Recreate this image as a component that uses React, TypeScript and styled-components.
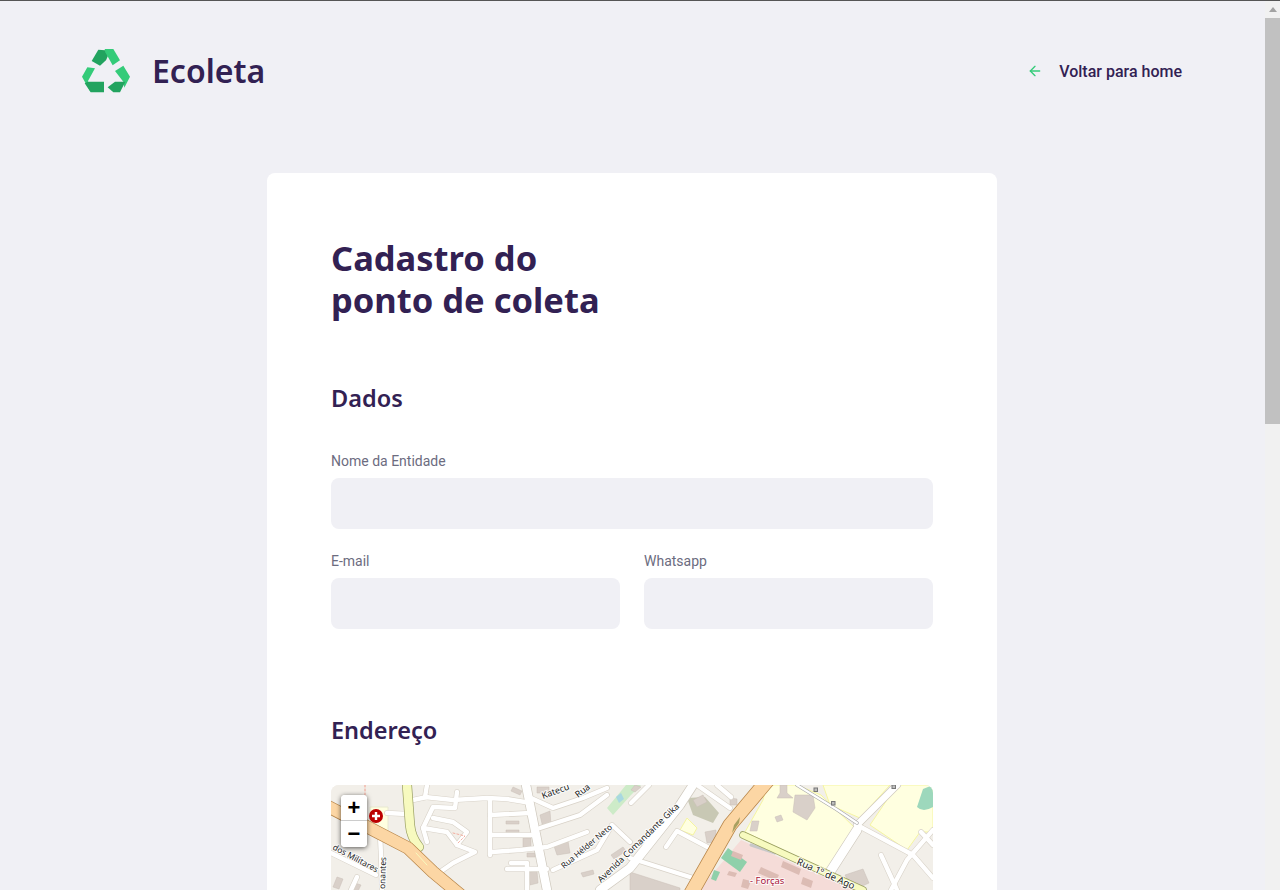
import styled, { createGlobalStyle } from "styled-components";
import { FiArrowLeft } from "react-icons/fi";

const GlobalStyle = createGlobalStyle`
  * {
    box-sizing: border-box;
  }
  html, body {
    margin: 0;
    height: 100%;
    overflow: hidden;
    background: #f0f0f5;
    font-family: Roboto, "Liberation Sans", sans-serif;
    color: #322153;
  }
`;

const TITLE_FONT = `"Noto Sans", "Open Sans", sans-serif`;

const TopLine = styled.div`
  height: 1px;
  background: #555;
`;

const Window = styled.div`
  display: flex;
  height: calc(100vh - 1px);
`;

const Viewport = styled.main`
  flex: 1;
  min-width: 0;
  overflow: hidden;
`;

// the browser's own scrollbar is hidden in the headless window
const ScrollBar = styled.div`
  width: 15px;
  background: #f1f1f1;
`;

const ScrollArrow = styled.div`
  height: 17px;
  display: flex;
  align-items: center;
  justify-content: center;

  &::before {
    content: "";
    border-left: 4px solid transparent;
    border-right: 4px solid transparent;
    border-bottom: 5px solid #a3a3a3;
  }
`;

const ScrollThumb = styled.div`
  height: 406px;
  background: #c1c1c1;
`;

const Page = styled.div`
  width: 1100px;
  margin-left: 82px;
  padding-bottom: 80px;
`;

const Header = styled.header`
  height: 172px;
  padding-top: 48px;
  display: flex;
  justify-content: space-between;
  align-items: flex-start;
`;

const Brand = styled.div`
  display: flex;
  align-items: center;
  gap: 22px;
  height: 44px;
`;

const BrandName = styled.span`
  font-family: ${TITLE_FONT};
  font-size: 32px;
  font-weight: 600;
  line-height: 44px;
`;

const BackLink = styled.a`
  display: flex;
  align-items: center;
  height: 44px;
  font-size: 16px;
  font-weight: 500;
  color: #322153;
  text-decoration: none;

  svg {
    color: #34cb79;
    font-size: 16px;
    margin-right: 16px;
  }
`;

const Card = styled.form`
  width: 730px;
  min-height: 1620px;
  margin: 0 auto;
  padding: 64px;
  background: #fff;
  border-radius: 8px;
`;

const Title = styled.h1`
  margin: 0 0 64px;
  font-family: ${TITLE_FONT};
  font-size: 34.5px;
  font-weight: 700;
  line-height: 42px;
`;

const Section = styled.fieldset`
  margin: 0 0 88px;
  padding: 0;
  border: 0;
  min-width: 0;
`;

const Legend = styled.h2`
  margin: 0 0 41px;
  font-family: ${TITLE_FONT};
  font-size: 23.5px;
  font-weight: 600;
  line-height: 27px;
`;

const Row = styled.div`
  display: flex;
  gap: 24px;
`;

const Field = styled.div`
  flex: 1;
  display: flex;
  flex-direction: column;
  margin-bottom: 24px;

  ${Row}:last-child & {
    margin-bottom: 0;
  }
`;

const Label = styled.label`
  font-size: 14px;
  line-height: 17px;
  margin-bottom: 8px;
  color: #6c6c80;
`;

const Input = styled.input`
  width: 100%;
  height: 51px;
  border: 0;
  border-radius: 8px;
  background: #f0f0f5;
  padding: 16px 24px;
  font-size: 16px;
  color: #6c6c80;
`;

const MapFrame = styled.div`
  position: relative;
  height: 350px;
  border-radius: 8px;
  overflow: hidden;
  background: #f2efe9;

  svg {
    display: block;
  }
`;

const ZoomControl = styled.div`
  position: absolute;
  top: 10px;
  left: 10px;
  width: 26px;
  border-radius: 4px;
  background: #fff;
  box-shadow: 0 1px 5px rgba(0, 0, 0, 0.65);
  overflow: hidden;
`;

const ZoomButton = styled.a<{ divided?: boolean }>`
  display: block;
  height: 26px;
  line-height: 26px;
  text-align: center;
  font-family: "Liberation Sans", sans-serif;
  font-size: 22px;
  font-weight: 700;
  color: #000;
  background: #fff;
  border-bottom: ${(props) => (props.divided ? "1px solid #ccc" : "0")};
`;

const MapLabel = styled.text<{ size?: number; tone?: string }>`
  font-family: "Noto Sans", "Open Sans", sans-serif;
  font-size: ${(props) => props.size || 9}px;
  fill: ${(props) => props.tone || "#1c1c1c"};
  stroke: rgba(255, 255, 255, 0.85);
  stroke-width: 2px;
  paint-order: stroke;
`;

const RecycleLogo = () => (
  <svg width="48" height="44" viewBox="36 42 144 132" aria-hidden="true">
    <path d="M65 78 85 44 106 46 114 62 108 76 90 92Z" fill="#22a35f" />
    <path d="M104 42H130L150 76 128 91 106 52Z" fill="#34cb79" />
    <path d="M36 125 52 97 75 100 54 138 62 172Z" fill="#34cb79" />
    <path d="M54 140H102V172H62L44 145Z" fill="#22a35f" />
    <path d="M135 108 160 92 180 125 163 158 160 140Z" fill="#34cb79" />
    <path d="M113 157 135 140H166L150 172H130Z" fill="#22a35f" />
  </svg>
);

const whiteRoads = [
  "M96 0 94 12 122 15 156 13 176 14 200 18",
  "M82 15 96 12",
  "M56 28 76 29",
  "M126 7 124 23 102 22 92 43 96 57",
  "M92 43 116 47 126 60 144 67 122 78 109 87",
  "M102 33 122 37 136 47 126 60",
  "M159 15V70",
  "M159 30 199 28",
  "M161 50 202 50",
  "M161 67 189 65 216 62 256 47",
  "M200 13 222 23 252 13 276 3",
  "M276 10 249 30 209 43",
  "M222 85 266 65 281 40 299 57",
  "M176 84 216 84",
  "M180 78 196 78 196 105",
  "M0 68 45 90",
  "M49 50 50 70 51 105",
  "M20 105 26 92",
  "M299 73 362 93",
  "M310 58 330 42",
  "M335 62 346 46 382 65",
  "M366 0 399 23",
  "M386 0 400 12",
  "M318 0 300 18",
  "M590 47 602 60",
  "M526 40 582 70 602 93",
  "M602 45 576 75 560 105",
  "M550 70 566 105",
];

const thickRoads = [
  { d: "M195 0 216 105", width: 8.5 },
  { d: "M269 105 299 83 349 20 362 0", width: 8.5 },
  { d: "M526 45 499 87", width: 9 },
  { d: "M566 0 526 40", width: 6.5 },
];

const buildings = [
  "M182 2 191 6 189 10 180 6Z",
  "M206 2 218 2 218 8 206 8Z",
  "M175 36 188 36 188 39 175 39Z",
  "M175 45 188 45 188 48 175 48Z",
  "M192 53 200 53 200 62 192 62Z",
  "M209 30 219 26 220 40 212 43Z",
  "M222 58 237 56 239 68 226 70Z",
  "M196 68 204 68 204 72 196 72Z",
  "M198 87 206 86 207 98 199 100Z",
  "M280 70 292 62 295 66 283 74Z",
  "M250 88 262 85 263 89 252 92Z",
  "M362 15 372 10 376 17 366 22Z",
  "M399 13 406 14 406 20 399 20Z",
  "M374 47 385 45 385 57 376 58Z",
  "M464 10 482 10 484 23 476 35 462 27Z",
  "M449 0 456 0 456 8 462 13 446 13 449 8Z",
  "M444 32 450 30 452 35 446 37Z",
  "M421 36 428 36 426 46 419 46Z",
  "M299 87 349 103 349 112 299 112Z",
  "M6 92 12 94 8 104 2 102Z",
  "M24 98 30 100 26 108 20 106Z",
  "M514 90 532 84 538 98 522 105Z",
  "M304 0 310 2 304 7 300 5Z",
];

const pinkBuildings = [
  "M402 66 412 70 410 75 400 71Z",
  "M430 82 448 90 445 96 427 88Z",
  "M398 86 406 88 404 92 396 90Z",
  "M412 94 420 96 417 104 410 102Z",
  "M452 76 470 84 468 90 450 82Z",
  "M472 92 482 96 480 103 470 99Z",
];

const OsmMap = () => (
  <svg width="602" height="350" viewBox="0 0 602 350" aria-hidden="true">
    <rect width="602" height="350" fill="#f2efe9" />

    {/* landuse */}
    <path d="M276 23 295 0H310L300 10 282 30Z" fill="#cdebc8" />
    <path d="M285 12 290 8 293 14 288 18Z" fill="#a8d8e0" />
    <path d="M432 15 414 47 469 73 499 87 526 45 490 10 466 0H436Z" fill="#ffffe0" stroke="#f5f5a0" />
    <path d="M492 0H559L529 33 499 20Z" fill="#ffffe0" stroke="#f5f5a0" />
    <path d="M566 0H602V47H589L576 65 539 40Z" fill="#ffffe0" stroke="#f5f5a0" />
    <path d="M586 22 592 4 602 0V22Q592 28 586 22Z" fill="#9dd8bc" />
    <path d="M349 45 356 33 366 43 362 50Z" fill="#ffffe0" stroke="#f5f5a0" />
    <path d="M356 13 374 12 388 28 382 38 362 30Z" fill="#c8c8b4" />
    <path d="M410 55 362 112 540 112 470 82Z" fill="#f5dcd8" />
    <path d="M397 63 416 77 409 87 390 73Z" fill="#8fd0aa" />
    <path d="M383 85 389 87 385 96 380 94Z" fill="#8fd0aa" />
    <path d="M39 22H57V47L39 35Z" fill="#ffffe0" stroke="#e8e8d0" />

    {buildings.map((d) => (
      <path key={d} d={d} fill="#d9d0c9" stroke="#c8beb6" strokeWidth="0.5" />
    ))}
    {pinkBuildings.map((d) => (
      <path key={d} d={d} fill="#dcbcb4" />
    ))}

    {/* streets */}
    <g fill="none" strokeLinecap="round" strokeLinejoin="round">
      {whiteRoads.map((d) => (
        <path key={d} d={d} stroke="#d8d2c8" strokeWidth="5.6" />
      ))}
      {thickRoads.map((road) => (
        <path key={road.d} d={road.d} stroke="#cfc9be" strokeWidth={road.width + 1.4} />
      ))}
      {whiteRoads.map((d) => (
        <path key={`w${d}`} d={d} stroke="#fff" strokeWidth="4.4" />
      ))}
      {thickRoads.map((road) => (
        <path key={`t${road.d}`} d={road.d} stroke="#fff" strokeWidth={road.width} />
      ))}
      <path d="M34 0V10" stroke="#f29c8c" strokeWidth="1" strokeDasharray="2 2" />
      <path d="M122 48 134 51 127 58" stroke="#f29c8c" strokeWidth="0.8" strokeDasharray="2 2" />

      <path d="M466 0 505 24 526 38" stroke="#a8a8a8" strokeWidth="3.4" />
      <path d="M466 0 505 24 526 38" stroke="#fff" strokeWidth="2.2" />
      <path d="M420 60 444 68" stroke="#c8c8c8" strokeWidth="3" />

      <path d="M76 0 79 40Q80 52 88 62" stroke="#9aa064" strokeWidth="10" />
      <path d="M76 0 79 40Q80 52 88 62" stroke="#f7fabf" strokeWidth="8.6" />
      <path d="M412 50 532 105" stroke="#9aa064" strokeWidth="7.5" />
      <path d="M412 50 532 105" stroke="#f7fabf" strokeWidth="6" />

      <path d="M-4 21 77 63 102 87 132 112" stroke="#b8864a" strokeWidth="13" />
      <path d="M-4 21 77 63 102 87 132 112" stroke="#fcd6a4" strokeWidth="11.6" />
      <path d="M436 -4 399 40 358 112" stroke="#b8864a" strokeWidth="15" />
      <path d="M436 -4 399 40 358 112" stroke="#fcd6a4" strokeWidth="13.5" />
      <path d="M85 68 96 80" stroke="#f7fabf" strokeWidth="1" />
    </g>
    <path d="M409 32 403 40 401 48 408 38Z" fill="#a8a060" />

    {/* osm nodes */}
    <g fill="#bdbdbd" stroke="#777" strokeWidth="1">
      <rect x="483" y="3" width="3.5" height="3.5" />
      <rect x="500.5" y="16.5" width="3.5" height="3.5" />
      <rect x="561" y="0" width="3.5" height="3.5" />
    </g>

    {/* hospital marker */}
    <circle cx="45" cy="31" r="7" fill="#bd0000" />
    <path d="M45 27V35M41 31H49" stroke="#fff" strokeWidth="2.4" />

    <MapLabel size={8.8} x="270" y="98" transform="rotate(-44 270 98)">
      Avenida Comandante Gika
    </MapLabel>
    <MapLabel size={8.2} x="233" y="84" transform="rotate(-40 233 84)">
      Rua Hélder Neto
    </MapLabel>
    <MapLabel size={9.5} x="465" y="79" transform="rotate(24 465 79)">
      Rua 1º de Ago
    </MapLabel>
    <MapLabel x="212" y="14" transform="rotate(-20 212 14)">
      Katecu
    </MapLabel>
    <MapLabel x="247" y="13" transform="rotate(-38 247 13)">
      Rua
    </MapLabel>
    <MapLabel size={8.4} x="1" y="64" transform="rotate(28 1 64)">
      dos Militares
    </MapLabel>
    <MapLabel size={8.4} x="54" y="104" transform="rotate(-88 54 104)">
      onantes
    </MapLabel>
    <MapLabel size={9.5} x="419" y="99" tone="#a8143a">
      - Forças
    </MapLabel>
  </svg>
);

const App = () => {
  return (
    <>
      <GlobalStyle />
      <TopLine />
      <Window>
        <Viewport>
          <Page>
            <Header>
              <Brand>
                <RecycleLogo />
                <BrandName>Ecoleta</BrandName>
              </Brand>
              <BackLink href="#">
                <FiArrowLeft />
                Voltar para home
              </BackLink>
            </Header>

            <Card>
              <Title>
                Cadastro do
                <br />
                ponto de coleta
              </Title>

              <Section>
                <Legend>Dados</Legend>
                <Row>
                  <Field>
                    <Label htmlFor="name">Nome da Entidade</Label>
                    <Input id="name" type="text" />
                  </Field>
                </Row>
                <Row>
                  <Field>
                    <Label htmlFor="email">E-mail</Label>
                    <Input id="email" type="email" />
                  </Field>
                  <Field>
                    <Label htmlFor="whatsapp">Whatsapp</Label>
                    <Input id="whatsapp" type="text" />
                  </Field>
                </Row>
              </Section>

              <Section>
                <Legend>Endereço</Legend>
                <MapFrame>
                  <OsmMap />
                  <ZoomControl>
                    <ZoomButton divided>+</ZoomButton>
                    <ZoomButton>−</ZoomButton>
                  </ZoomControl>
                </MapFrame>
              </Section>
            </Card>
          </Page>
        </Viewport>
        <ScrollBar>
          <ScrollArrow />
          <ScrollThumb />
        </ScrollBar>
      </Window>
    </>
  );
};

export default App;
